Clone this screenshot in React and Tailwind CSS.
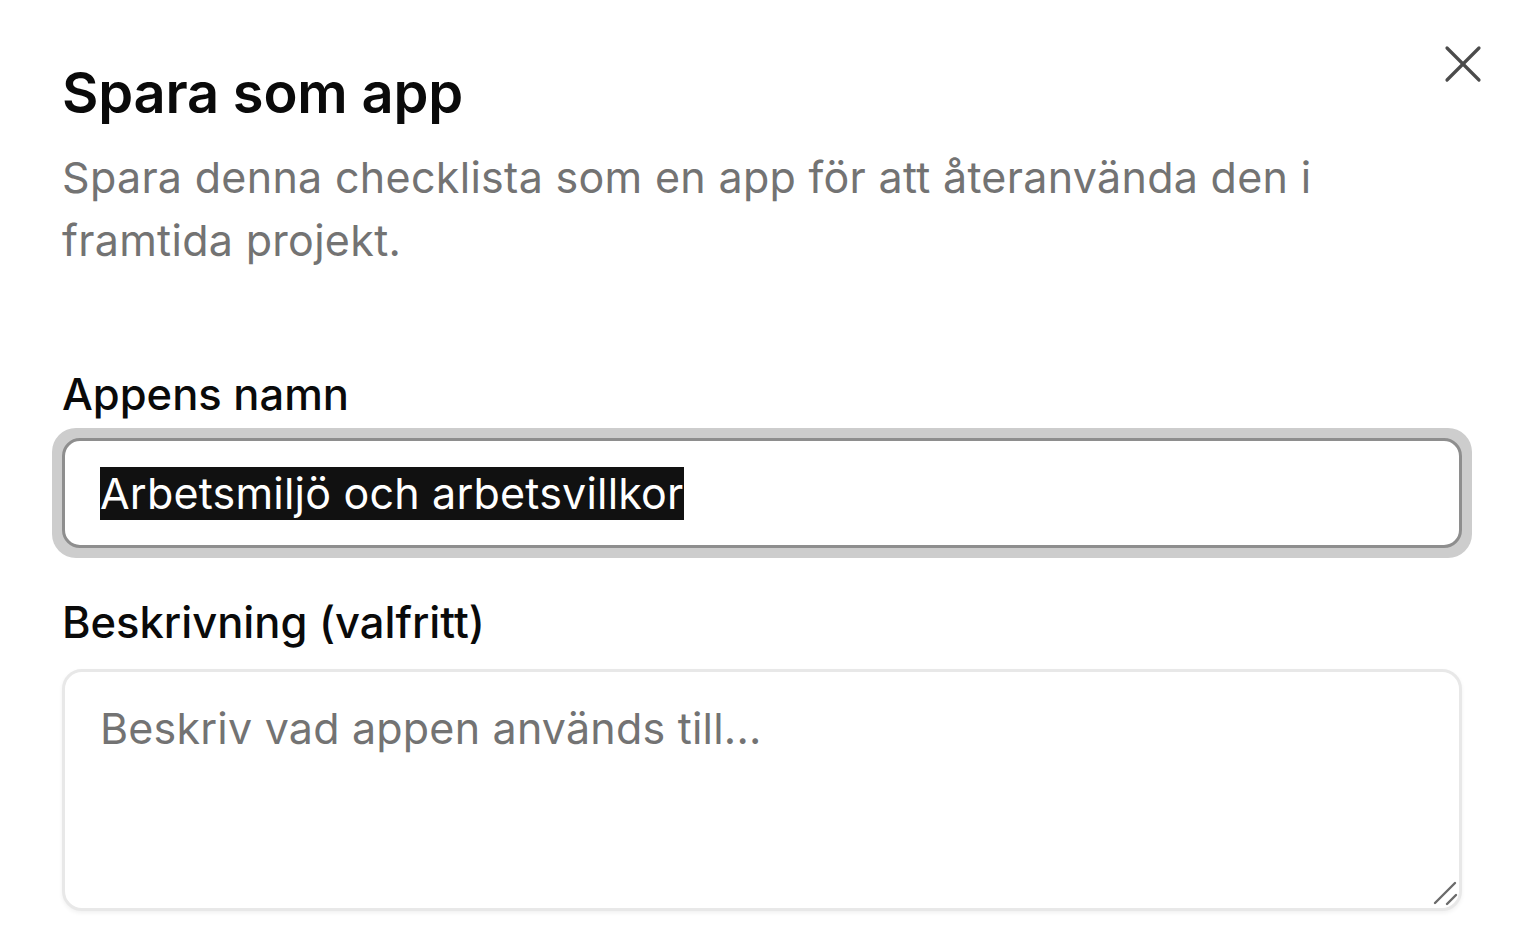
import React from 'react'

function CloseIcon() {
  return (
    <svg width="64" height="64" viewBox="0 0 24 24" fill="none" stroke="#4b4b4b" strokeWidth="1.2" strokeLinecap="round">
      <path d="M18 6 6 18" />
      <path d="m6 6 12 12" />
    </svg>
  )
}

function ResizeGrip() {
  return (
    <svg width="26" height="26" viewBox="0 0 26 26" fill="none" stroke="#6b6b6b" strokeWidth="2.4" strokeLinecap="round">
      <path d="M3 23 23 3" />
      <path d="M15 24 24 15" />
    </svg>
  )
}

export default function App() {
  return (
    <div className="min-h-screen bg-white font-['Inter',sans-serif] text-[#0a0a0a]">
      <div className="relative pl-[62px] pr-[70px] pt-[58px]">
        <button className="absolute right-[37px] top-[32px] text-[#4b4b4b]">
          <CloseIcon />
        </button>

        <h2 className="text-[56px] font-semibold leading-[70px] tracking-[-0.2px]">Spara som app</h2>
        <p className="mt-[18px] text-[43px] leading-[63px] text-[#737373] tracking-[0.3px]">
          Spara denna checklista som en app för att återanvända den i framtida projekt.
        </p>

        <div className="mt-[97px] flex flex-col">
          <label className="text-[43.5px] font-medium leading-[50px]">Appens namn</label>
          <div className="mt-[9px] rounded-[24px] bg-[#cdcdcd] p-[10px] -mx-[10px]">
            <div className="flex h-[110px] items-center rounded-[18px] border-[3px] border-[#8e8e8e] bg-white px-[35px]">
              <span className="bg-[#111] text-[43px] leading-[53px] text-white tracking-[0.2px]">Arbetsmiljö och arbetsvillkor</span>
            </div>
          </div>

          <label className="mt-[39px] text-[43.5px] font-medium leading-[50px]">Beskrivning (valfritt)</label>
          <div className="relative mt-[22px]">
            <textarea
              placeholder="Beskriv vad appen används till..."
              className="block h-[242px] w-full resize-none rounded-[20px] border-[3px] border-[#e8e8e8] bg-white px-[35px] py-[26px] text-[43px] leading-[60px] tracking-[0.2px] shadow-[0_2px_4px_rgba(0,0,0,0.06)] outline-none placeholder:text-[#737373]"
            />
            <div className="pointer-events-none absolute bottom-[5px] right-[4px]">
              <ResizeGrip />
            </div>
          </div>
        </div>
      </div>
    </div>
  )
}
